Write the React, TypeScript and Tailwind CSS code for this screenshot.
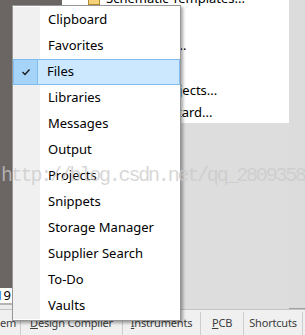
import React from "react";

const items = [
  "Clipboard",
  "Favorites",
  "Files",
  "Libraries",
  "Messages",
  "Output",
  "Projects",
  "Snippets",
  "Storage Manager",
  "Supplier Search",
  "To-Do",
  "Vaults",
];

function MenuItem({ label, checked }: { label: string; checked?: boolean }) {
  if (checked) {
    return (
      <div className="flex h-[26px] border border-[#7fbcf2] bg-[#cce8ff]">
        <div className="flex w-[24px] items-center justify-center border-r border-[#7fbcf2] bg-[#a6d3f8]">
          <svg width="10" height="8" viewBox="0 0 10 8">
            <polyline points="1.5,4 4,6.5 8.5,1.5" fill="none" stroke="#1a1a1a" strokeWidth="1.4" />
          </svg>
        </div>
        <div className="flex items-center pl-[9px] text-[13px] text-black">{label}</div>
      </div>
    );
  }
  return (
    <div className="flex h-[26px]">
      <div className="w-[27px] bg-[#f0f0f0]" />
      <div className="flex items-center pl-[8px] text-[13px] text-black">{label}</div>
    </div>
  );
}

export default function App() {
  return (
    <div className="relative h-[335px] w-[305px] overflow-hidden bg-[#dddddd] font-['Noto_Sans',sans-serif]">
      <div className="flex h-[309px]">
        {/* left dark panel */}
        <div className="flex w-[62px] flex-col">
          <div className="h-[288px] bg-[#6b6664]" />
          <div className="flex h-[15px] items-center overflow-hidden bg-white text-[13px] leading-none">
            <span className="-ml-[4px] text-[#2a6fd6]">1</span>
            <span className="text-black">9</span>
          </div>
          <div className="h-[2px] bg-[#b4b4b4]" />
          <div className="flex-1 bg-[#ececec]" />
        </div>
        {/* white panel */}
        <div className="flex w-[227px] flex-col">
          <div className="flex h-[123px] flex-col overflow-hidden bg-white text-[13px] text-black">
            <div className="-mt-[12px] flex h-[22px] shrink-0 items-center gap-[6px] pl-[26px]">
              <div className="h-[12px] w-[12px] border border-[#b58a2a] bg-[#f6d27a]" />
              <span>Schematic Templates...</span>
            </div>
            <div className="h-[25px] shrink-0" />
            <div className="flex h-[22px] shrink-0 items-center pl-[114px]">...</div>
            <div className="h-[23px] shrink-0" />
            <div className="flex h-[22px] shrink-0 items-center pl-[117px]">jects...</div>
            <div className="flex h-[22px] shrink-0 items-center pl-[115px]">tard...</div>
          </div>
          <div className="flex-1" />
        </div>
        <div className="flex flex-1 flex-col">
          <div className="flex-1 bg-[#dcdcdc]" />
          <div className="h-[1px] bg-[#a0a0a0]" />
        </div>
      </div>

      {/* tab bar */}
      <div className="flex h-[26px] border-t border-[#c4c4c4] bg-[#f0f0f0] pt-[2px] text-[11px] tracking-[-0.2px] text-[#3c3c3c]">
        <div className="flex w-[21px] items-center border-r border-[#cdcdcd]">em</div>
        <div className="flex w-[102px] items-center justify-center border-r border-[#cdcdcd]">
          <span><span className="underline">D</span>esign Compiler</span>
        </div>
        <div className="flex w-[78px] items-center justify-center border-r border-[#cdcdcd]">
          <span><span className="underline">I</span>nstruments</span>
        </div>
        <div className="flex w-[43px] items-center justify-center border-r border-[#cdcdcd]">
          <span><span className="underline">P</span>CB</span>
        </div>
        <div className="flex w-[59px] items-center justify-center border-r border-[#cdcdcd]">Shortcuts</div>
      </div>

      {/* popup menu */}
      <div className="absolute left-[12px] top-[5px] flex w-[169px] flex-col border border-[#979797] bg-white pb-[1px] pt-[1px] shadow-[2px_2px_3px_rgba(0,0,0,0.35)]">
        {items.map((it) => (
          <MenuItem key={it} label={it} checked={it === "Files"} />
        ))}
      </div>

      {/* watermark */}
      <div className="pointer-events-none absolute left-[1px] top-[166px] whitespace-nowrap font-['Liberation_Mono',monospace] text-[20px] leading-none tracking-[-2.2px] text-[#cacaca]/75">
        http://blog.csdn.net/qq_2809358
      </div>
    </div>
  );
}
